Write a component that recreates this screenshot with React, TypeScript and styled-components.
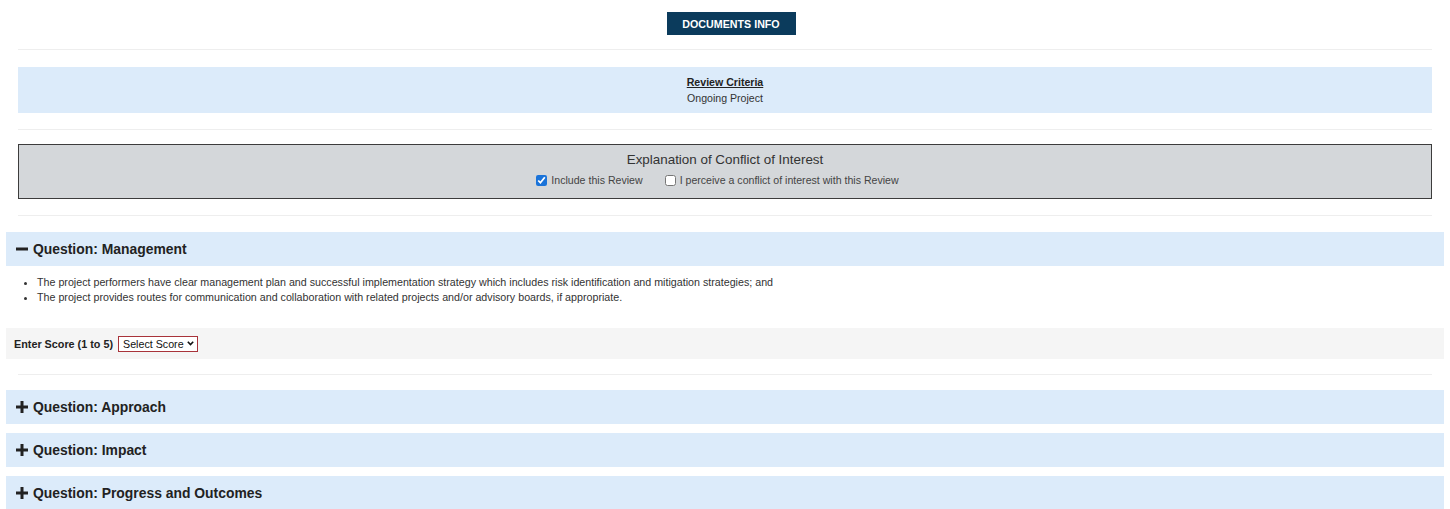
import styled, { createGlobalStyle } from "styled-components";

const GlobalStyle = createGlobalStyle`
	body {
		margin: 0;
		background: #fff;
		font-family: "Liberation Sans", Arial, sans-serif;
		color: #333;
	}
`;

const Page = styled.div`
	padding: 0 6px;
	display: flex;
	flex-direction: column;
`;

const Inner = styled.div`
	margin: 0 12px;
	display: flex;
	flex-direction: column;
`;

const TopBar = styled.div`
	display: flex;
	justify-content: center;
	padding-top: 12px;
`;

const DocsButton = styled.button`
	width: 129px;
	height: 23px;
	border: none;
	background: #0b3b5c;
	color: #fff;
	font-family: "Liberation Sans", Arial, sans-serif;
	font-size: 10.7px;
	font-weight: bold;
	padding: 0;
	margin-left: 12px;
`;

const Rule = styled.div<{ $top: number; $bottom: number }>`
	height: 1px;
	background: #eeeeee;
	margin-top: ${(p) => p.$top}px;
	margin-bottom: ${(p) => p.$bottom}px;
`;

const CriteriaBox = styled.div`
	background: #dcebfa;
	padding: 7px 0;
	text-align: center;
	font-size: 10.6px;
	line-height: 16px;
	color: #333;
`;

const CriteriaTitle = styled.div`
	font-weight: bold;
	text-decoration: underline;
	color: #222;
`;

const ConflictBox = styled.div`
	background: #d4d7da;
	border: 1px solid #3c3c3c;
	padding: 6px 0 10px;
	display: flex;
	flex-direction: column;
	align-items: center;
`;

const ConflictTitle = styled.div`
	font-size: 13.4px;
	line-height: 18px;
	color: #333;
`;

const CheckRow = styled.div`
	display: flex;
	gap: 22px;
	margin-top: 3px;
	padding-right: 15px;
	font-size: 10.6px;
	line-height: 16px;
	color: #444;
`;

const CheckLabel = styled.label`
	display: flex;
	align-items: center;
	gap: 4px;
`;

const CheckBox = styled.input`
	width: 11px;
	height: 11px;
	margin: 0;
	accent-color: #1a73d9;
`;

const QuestionHeader = styled.div<{ $gap: number }>`
	background: #dcebfa;
	height: 34px;
	display: flex;
	align-items: center;
	gap: 5px;
	padding-left: 10px;
	margin-bottom: ${(p) => p.$gap}px;
	font-size: 13.9px;
	font-weight: bold;
	color: #222;
`;

const BulletList = styled.ul`
	margin: 9px 0 0;
	padding-left: 31px;
	font-size: 10.7px;
	line-height: 15px;
	color: #333;
`;

const ScoreRow = styled.div`
	background: #f5f5f5;
	height: 31px;
	margin-top: 23px;
	display: flex;
	align-items: center;
	gap: 5px;
	padding-left: 8px;
	font-size: 10.8px;
`;

const ScoreLabel = styled.span`
	font-weight: bold;
	color: #222;
`;

const SelectWrap = styled.div`
	position: relative;
	display: flex;
`;

const ScoreSelect = styled.select`
	appearance: none;
	height: 16px;
	width: 80px;
	border: 1px solid #a8333a;
	border-radius: 0;
	background: #fff;
	font-family: "Liberation Sans", Arial, sans-serif;
	font-size: 10.7px;
	color: #111;
	padding: 0 0 0 4px;
	margin: 0;
`;

const Chevron = styled.svg`
	position: absolute;
	right: 4px;
	top: 5px;
	pointer-events: none;
`;

function Toggle({ open }: { open: boolean }) {
	return (
		<svg width="12" height="12" viewBox="0 0 12 12">
			<rect x="0" y="4.5" width="12" height="3" fill="#222" />
			{!open && <rect x="4.5" y="0" width="3" height="12" fill="#222" />}
		</svg>
	);
}

export default function App() {
	return (
		<Page>
			<GlobalStyle />
			<TopBar>
				<DocsButton>DOCUMENTS INFO</DocsButton>
			</TopBar>
			<Inner>
				<Rule $top={14} $bottom={17} />
				<CriteriaBox>
					<CriteriaTitle>Review Criteria</CriteriaTitle>
					<div>Ongoing Project</div>
				</CriteriaBox>
				<Rule $top={16} $bottom={14} />
				<ConflictBox>
					<ConflictTitle>Explanation of Conflict of Interest</ConflictTitle>
					<CheckRow>
						<CheckLabel>
							<CheckBox type="checkbox" defaultChecked />
							Include this Review
						</CheckLabel>
						<CheckLabel>
							<CheckBox type="checkbox" />
							I perceive a conflict of interest with this Review
						</CheckLabel>
					</CheckRow>
				</ConflictBox>
				<Rule $top={16} $bottom={16} />
			</Inner>
			<QuestionHeader $gap={0}>
				<Toggle open />
				Question: Management
			</QuestionHeader>
			<BulletList>
				<li>
					The project performers have clear management plan and successful implementation
					strategy which includes risk identification and mitigation strategies; and
				</li>
				<li>
					The project provides routes for communication and collaboration with related projects
					and/or advisory boards, if appropriate.
				</li>
			</BulletList>
			<ScoreRow>
				<ScoreLabel>Enter Score (1 to 5)</ScoreLabel>
				<SelectWrap>
					<ScoreSelect defaultValue="">
						<option value="">Select Score</option>
						<option value="1">1</option>
						<option value="2">2</option>
						<option value="3">3</option>
						<option value="4">4</option>
						<option value="5">5</option>
					</ScoreSelect>
					<Chevron width="7" height="5" viewBox="0 0 7 5">
						<path d="M0.8 0.8 L3.5 3.6 L6.2 0.8" fill="none" stroke="#111" strokeWidth="1.6" />
					</Chevron>
				</SelectWrap>
			</ScoreRow>
			<Inner>
				<Rule $top={15} $bottom={15} />
			</Inner>
			<QuestionHeader $gap={9}>
				<Toggle open={false} />
				Question: Approach
			</QuestionHeader>
			<QuestionHeader $gap={9}>
				<Toggle open={false} />
				Question: Impact
			</QuestionHeader>
			<QuestionHeader $gap={0}>
				<Toggle open={false} />
				Question: Progress and Outcomes
			</QuestionHeader>
		</Page>
	);
}
